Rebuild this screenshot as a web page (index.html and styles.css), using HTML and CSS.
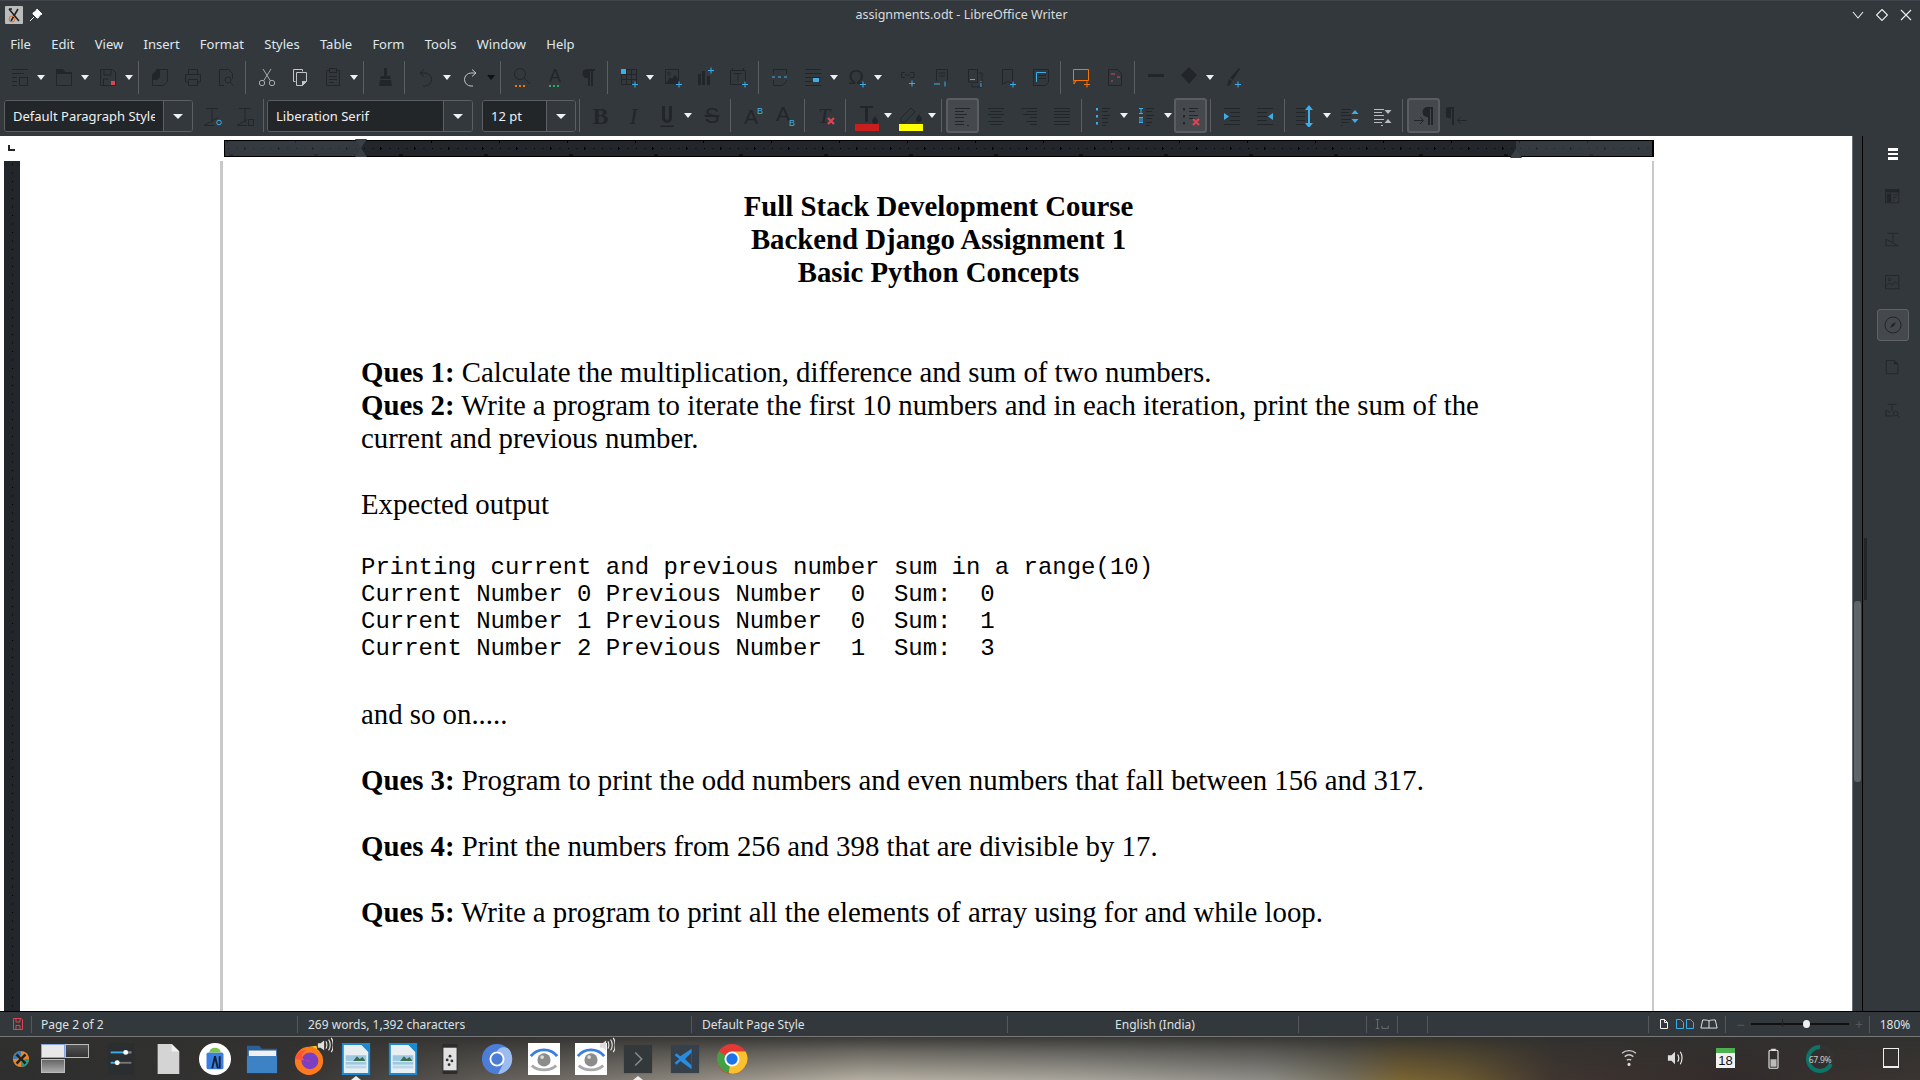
FILE: index.html
```html
<!DOCTYPE html>
<html lang="en">
<head>
<meta charset="utf-8">
<title>assignments.odt - LibreOffice Writer</title>
<link rel="stylesheet" href="styles.css">
</head>
<body>
<svg class="defs" width="0" height="0" aria-hidden="true">
<defs>
<symbol id="new" viewBox="0 0 22 22"><path d="M3 3.500h16M3 7.500h12M3 11.500h5M3 15.500h5M3 19.500h5"/><rect x="10.500" y="11.500" width="8" height="8"/></symbol>
<symbol id="open" viewBox="0 0 22 22"><path d="M3.500 3.500h6l2 3h7v13h-15z"/><path class="f" d="M3 3h7l2 3h7v2H3z"/></symbol>
<symbol id="save" viewBox="0 0 22 22"><path d="M3.500 3.500h12l3 3v13h-15zM7 4v5h7V4M6.500 19v-6h5"/><rect class="red" x="14" y="15" width="4" height="4"/></symbol>
<symbol id="tpl" viewBox="0 0 22 22"><path d="M7 3.500h11.500v12l-4 4h-11V8"/><path class="f" d="M8 3l3 0v8l-3 3H4V8z"/></symbol>
<symbol id="print" viewBox="0 0 22 22"><path d="M6.500 8V3.500h9V8M6.500 16h-3V8.500h15V16h-3M6.500 13.500h9v6h-9z"/></symbol>
<symbol id="prev" viewBox="0 0 22 22"><path d="M9 19.500H4.500v-16h9l4 4v5"/><circle cx="13" cy="14" r="3"/><path d="M15 16l3.500 3.500"/></symbol>
<symbol id="cut" viewBox="0 0 22 22"><circle cx="6" cy="17" r="2.700"/><circle cx="16" cy="17" r="2.700"/><path d="M7.500 15L15 3M14.500 15L7 3"/></symbol>
<symbol id="copy" viewBox="0 0 22 22"><path d="M6.500 15.500h-2v-12h9v2"/><path d="M7.500 6.500h10v9l-4 4h-6z"/><path class="f" d="M13 15h5l-5 5z"/></symbol>
<symbol id="paste" viewBox="0 0 22 22"><path d="M7.500 4.500h-3v15h13v-15h-3"/><rect x="7.500" y="2.500" width="7" height="4"/><path d="M7 10.500h8M7 13.500h8M7 16.500h5"/></symbol>
<symbol id="clone" viewBox="0 0 22 22"><path class="f" d="M10 2h3v8h3l1 3H6l1-3h3zM6 14h11l1 6H5z"/></symbol>
<symbol id="undo" viewBox="0 0 22 22"><path d="M9 3.500L5 7l4 3.500M5 7h5a6 6 0 0 1 0 13H8"/></symbol>
<symbol id="redo" viewBox="0 0 22 22"><path d="M13 3.500L17 7l-4 3.500M17 7h-5a6 6 0 0 0 0 13h2"/></symbol>
<symbol id="find" viewBox="0 0 22 22"><circle cx="9" cy="8" r="5.500"/><path d="M13 12l6 6"/><path class="dots-o" d="M4 20h10"/></symbol>
<symbol id="spell" viewBox="0 0 22 22"><text class="t" x="11" y="16" font-size="18">A</text><path class="dots-g" d="M5 20h2M9 20h2M13 20h2"/></symbol>
<symbol id="para" viewBox="0 0 22 22"><path class="f" d="M9 3h9v2h-2v15h-2V5h-1v15h-2v-8a4.500 4.500 0 0 1-2-9z"/></symbol>
<symbol id="table" viewBox="0 0 22 22"><rect x="3.500" y="3.500" width="15" height="15"/><path d="M3 8.500h16M3 13.500h16M8.500 3v16M13.500 3v16"/><rect class="blue" x="3" y="3" width="5" height="5"/><path class="bs" d="M14 18.500h6M17 15.500v6"/></symbol>
<symbol id="image" viewBox="0 0 22 22"><rect x="3.500" y="3.500" width="13" height="14"/><circle cx="7" cy="7.500" r="1.500"/><path class="f" d="M4 17l4-6 2 2 3-4 3 4v4z"/><path class="bs" d="M14 18.500h6M17 15.500v6"/></symbol>
<symbol id="chart" viewBox="0 0 22 22"><path class="f" d="M3 8h3v11H3zM7 5h3v14H7zM12 10h3v9h-3z"/><path class="bs" d="M13 4.500h6M16 1.500v6"/></symbol>
<symbol id="tbox" viewBox="0 0 22 22"><path d="M2.500 4.500h15v14h-15zM4.500 2v3M15.500 2v3"/><path d="M6 7.500h8M10 7.500v8"/><path class="bs" d="M14 18.500h6M17 15.500v6"/></symbol>
<symbol id="pbreak" viewBox="0 0 22 22"><path d="M4.500 8V3.500h13V8M4.500 14v5.500h9l4-4V14"/><path class="bs" d="M3 11h3M9 11h3M15 11h3"/></symbol>
<symbol id="field" viewBox="0 0 22 22"><path d="M3 3.500h16M3 7.500h16M3 11.500h16M3 15.500h16M3 19.500h16"/><rect class="blue" x="11" y="12" width="6" height="4"/></symbol>
<symbol id="omega" viewBox="0 0 22 22"><text class="t" x="10" y="18" font-size="21">Ω</text><path class="bs" d="M14 18.500h6M17 15.500v6"/></symbol>
<symbol id="link" viewBox="0 0 22 22"><path d="M7 6.500H3.500v5H7M12 6.500h4v5h-4M7 9h5"/><path class="bs" d="M11 17.500h6M14 14.500v6"/></symbol>
<symbol id="foot" viewBox="0 0 22 22"><path d="M5.500 15V3.500h11v11M8 7h6M8 10h6"/><path class="bs" d="M3 18h6M14 15.500v5"/></symbol>
<symbol id="end" viewBox="0 0 22 22"><path d="M4.500 16V3.500h9v13zM15 7h3v14H8v-3"/><path class="bs" d="M6 13.500h5M17 15v1M17 17v4"/></symbol>
<symbol id="bookmark" viewBox="0 0 22 22"><path d="M5.500 3.500h10v14l-5-2-5 3z"/><path class="bs" d="M13 18.500h6M16 15.500v6"/></symbol>
<symbol id="xref" viewBox="0 0 22 22"><path d="M3.500 3.500h15v13l-3 3h-12z"/><path class="bs" d="M6.500 16V6.500H16"/><path d="M9 9.500h7M9 12.500h7"/></symbol>
<symbol id="comment" viewBox="0 0 22 22"><path class="os" d="M2.500 3.500h15v11h-15zM3 15v3l2-3M13 18.500h6M16 15.500v6"/></symbol>
<symbol id="track" viewBox="0 0 22 22"><path d="M4.500 3.500h9l4 4v12h-13z"/><path class="rs" d="M7 8h4M13 11h3M7 15h2"/></symbol>
<symbol id="line" viewBox="0 0 22 22"><path class="f" d="M3 8h16v3H3z"/></symbol>
<symbol id="diamond" viewBox="0 0 22 22"><path class="f" d="M11 1l8 8-8 9-8-9z"/></symbol>
<symbol id="brush" viewBox="0 0 22 22"><path class="f" d="M17 2l1 1-7 11-3-2zM7 13l3 2-2 4-3 1z"/><path class="bs" d="M13 18.500h6M16 15.500v6"/></symbol>
<symbol id="tstyle" viewBox="0 0 22 22"><path d="M4 3.500h12M10 3.500v14M2 20.500l14-8"/><path d="M2 20.500h10"/><circle class="bc" cx="17" cy="17.500" r="2.300"/></symbol>
<symbol id="tupd" viewBox="0 0 22 22"><path d="M4 3.500h12M10 3.500v14M2 20.500l10-6M2 20.500h10"/><path d="M13.500 14.500h5v6h-5z"/></symbol>
<symbol id="under" viewBox="0 0 22 22"><path class="f" d="M6 1h3v12a2 2 0 0 0 4 0V1h3v12a5 5 0 0 1-10 0zM4 20.500h14v1.500H4z"/></symbol>
<symbol id="sup" viewBox="0 0 22 22"><text class="t" x="10" y="19" font-size="21">A</text><text class="tb" x="19" y="9" font-size="9">B</text></symbol>
<symbol id="sub" viewBox="0 0 22 22"><text class="t" x="9" y="16" font-size="21">A</text><text class="tb" x="18" y="21" font-size="9">B</text></symbol>
<symbol id="clear" viewBox="0 0 22 22"><text class="ti" x="9" y="18" font-size="22">T</text><path class="rb" d="M13 13l6 6M19 13l-6 6"/></symbol>
<symbol id="fcolor" viewBox="0 0 26 26"><path class="f" d="M6 1h13v2h-5v14h-3V3H6z"/><path class="f" d="M21 11c2 3 3 4 3 5a3 3 0 0 1-6 0c0-1 1-2 3-5z"/><rect class="redbar" x="1" y="19" width="24" height="7"/></symbol>
<symbol id="hcolor" viewBox="0 0 26 26"><path d="M3 13L13 3l4 4L7 17H3z"/><path class="f" d="M21 9c2 3 3 4 3 5a3 3 0 0 1-6 0c0-1 1-2 3-5z"/><rect class="yelbar" x="1" y="19" width="24" height="7"/></symbol>
<symbol id="al" viewBox="0 0 22 22"><path d="M3 3.500h15M3 6.500h9M3 9.500h12M3 12.500h9M3 16.500h9M3 19.500h9M15 20.500h2"/></symbol>
<symbol id="ac" viewBox="0 0 22 22"><path d="M3 3.500h16M5 6.500h12M3 9.500h16M6 12.500h10M3 16.500h16M5 19.500h12"/></symbol>
<symbol id="ar" viewBox="0 0 22 22"><path d="M3 3.500h16M9 6.500h10M5 9.500h14M12 12.500h7M8 16.500h11M12 19.500h7"/></symbol>
<symbol id="aj" viewBox="0 0 22 22"><path d="M3 3.500h16M3 6.500h16M3 9.500h16M3 12.500h16M3 16.500h16M3 19.500h16"/></symbol>
<symbol id="bull" viewBox="0 0 22 22"><path class="bw" d="M5 3v2.500M5 10v2.500M5 17v2.500"/><path d="M10 3.500h8M10 6.500h6M10 10.500h8M10 13.500h6M10 17.500h6M10 20.500h4"/></symbol>
<symbol id="num" viewBox="0 0 22 22"><path class="bs" d="M3 3.500h4M5 3.500v5M3 8.500h4M3 12.500h4M4 12.500v5M6 12.500v5M3 17.500h4"/><path d="M10 3.500h8M10 6.500h6M10 10.500h8M10 13.500h6M10 17.500h6M10 20.500h4"/></symbol>
<symbol id="outl" viewBox="0 0 22 22"><path class="dw" d="M4 3v2.500M4 10v2.500M4 17v2.500"/><path d="M9 3.500h9M9 6.500h6M9 10.500h9M9 13.500h6"/><path class="rb" d="M13 14l6 6M19 14l-6 6"/></symbol>
<symbol id="ind" viewBox="0 0 22 22"><path d="M3 3.500h16M9 7.500h10M9 11.500h10M9 15.500h10M3 19.500h16"/><path class="blue" d="M3 8l5 3.500L3 15z"/></symbol>
<symbol id="dedt" viewBox="0 0 22 22"><path d="M3 3.500h16M3 7.500h10M3 11.500h10M3 15.500h10M3 19.500h16"/><path class="blue" d="M19 8l-5 3.500 5 3.500z"/></symbol>
<symbol id="lspace" viewBox="0 0 22 22"><path d="M1 3.500h9M1 7.500h9M1 11.500h9M1 15.500h9M1 19.500h9"/><path class="bw" d="M14 3v17"/><path class="blue" d="M14 0l4 5h-8zM14 23l4-5h-8z"/></symbol>
<symbol id="pinc" viewBox="0 0 22 22"><path d="M2 4.500h10M2 7.500h8M2 10.500h10M2 14.500h10M2 17.500h8M2 20.500h2"/><path class="blue" d="M16 5l3.500 4h-7zM16 18l3.500-4h-7z"/></symbol>
<symbol id="pdec" viewBox="0 0 22 22"><path class="lg" d="M2 4.500h10M2 7.500h8M2 10.500h10M2 14.500h10M2 17.500h8M9 20.500h2"/><path class="gf" d="M16 9l3.500-4h-7zM16 14l3.500 4h-7z"/></symbol>
<symbol id="ltr" viewBox="0 0 22 22"><path class="f" d="M14 2h6v18h-2V4h-1v16h-2v-8a5 5 0 0 1-1-10z"/><path d="M1 15.500h9M7 12l3.500 3.500L7 19"/></symbol>
<symbol id="rtl" viewBox="0 0 22 22"><path class="f" d="M2 2h6v18H6V4H5v9a5 5 0 0 1-3-11z"/><path d="M21 15.500h-9M15 12l-3.500 3.500L15 19"/></symbol>
<symbol id="sb1" viewBox="0 0 18 18"><rect x=".5" y=".5" width="15" height="15"/><path class="f" d="M1 1h15v3H1zM2 5h5v10H2z"/><path d="M9 6.500h5M9 9.500h4M9 12.500h2"/></symbol>
<symbol id="sb2" viewBox="0 0 18 18"><path d="M3 1.500h12M9 1.500v10M1 15.500h14L1 8z"/></symbol>
<symbol id="sb3" viewBox="0 0 18 18"><rect x=".5" y=".5" width="15" height="15"/><circle cx="5" cy="5" r="1.500"/><path d="M1 12l4-3 3 2 4-3 3 3"/></symbol>
<symbol id="sb4" viewBox="0 0 18 18"><circle cx="9" cy="9" r="8"/><path class="f" d="M12 6l-2 4-4 2 2-4z"/></symbol>
<symbol id="sb5" viewBox="0 0 18 18"><path d="M1.500 .5h9l4 4v11h-13z"/><path class="f" d="M10 1l5 4h-5z"/></symbol>
<symbol id="sb6" viewBox="0 0 18 18"><path d="M3 1.500h10M8 1.500v8M1 14.500h8M1 14.500V8l5 3"/><circle cx="12" cy="12" r="2.500"/><path d="M14 14l2.500 2.500"/></symbol>
<symbol id="stsave" viewBox="0 0 12 14"><path d="M1.500 1.500h8l1 1v10h-9zM4 2v3h4V2M4 12.500V8.500h4v4"/></symbol>
<symbol id="v1" viewBox="0 0 12 12"><path d="M2.500 1.500h4l3 3v6h-7zM6.500 1.500v3h3"/></symbol>
<symbol id="v2" viewBox="0 0 20 12"><path d="M1.500 1.500h4l3 3v6h-7zM11.500 1.500h4l3 3v6h-7z"/></symbol>
<symbol id="v3" viewBox="0 0 20 12"><path d="M10 2.500c-2-1-4-1-7 -1l-2 9h18l-2-9c-3 0-5 0-7 1zM10 2.500v8"/></symbol>
</defs>
</svg>

<div class="app">
  <header class="titlebar">
    <div class="tb-left">
      <svg class="appicon" viewBox="0 0 18 18"><rect width="18" height="18" rx="1" fill="#bcbcbc"/><path d="M4 3l10 12M13 3L6 15M4 3h3" stroke="#222" stroke-width="1.600" fill="none"/><circle cx="7" cy="13" r="3" fill="none" stroke="#d2703a"/></svg>
      <svg class="pin" viewBox="0 0 14 14"><path d="M8 1l5 5-2 1-2 3-1 0-4-4 0-1 3-2zM5 9l-4 4" fill="#fff" stroke="#fff"/></svg>
    </div>
    <div class="title">assignments.odt - LibreOffice Writer</div>
    <div class="winbtns">
      <svg viewBox="0 0 12 12"><path d="M1 3l5 6 5-6"/></svg>
      <svg viewBox="0 0 12 12"><path d="M6 .5L11.500 6 6 11.500.5 6z"/></svg>
      <svg viewBox="0 0 12 12"><path d="M1 1l10 10M11 1L1 11"/></svg>
    </div>
  </header>

  <nav class="menubar">
    <span>File</span><span>Edit</span><span>View</span><span>Insert</span><span>Format</span><span>Styles</span><span>Table</span><span>Form</span><span>Tools</span><span>Window</span><span>Help</span>
  </nav>

  <div class="toolbar t1">
    <i class="b"><svg><use href="#new"/></svg></i><i class="a"></i>
    <i class="b"><svg><use href="#open"/></svg></i><i class="a"></i>
    <i class="b"><svg><use href="#save"/></svg></i><i class="a"></i><i class="s"></i>
    <i class="b"><svg><use href="#tpl"/></svg></i>
    <i class="b"><svg><use href="#print"/></svg></i>
    <i class="b"><svg><use href="#prev"/></svg></i><i class="s"></i>
    <i class="b lit"><svg><use href="#cut"/></svg></i>
    <i class="b lit2"><svg><use href="#copy"/></svg></i>
    <i class="b"><svg><use href="#paste"/></svg></i><i class="a"></i><i class="s"></i>
    <i class="b"><svg><use href="#clone"/></svg></i><i class="s"></i>
    <i class="b"><svg><use href="#undo"/></svg></i><i class="a"></i>
    <i class="b lit2"><svg><use href="#redo"/></svg></i><i class="a dark"></i><i class="s"></i>
    <i class="b"><svg><use href="#find"/></svg></i>
    <i class="b"><svg><use href="#spell"/></svg></i>
    <i class="b"><svg><use href="#para"/></svg></i><i class="s"></i>
    <i class="b"><svg><use href="#table"/></svg></i><i class="a"></i>
    <i class="b"><svg><use href="#image"/></svg></i>
    <i class="b"><svg><use href="#chart"/></svg></i>
    <i class="b"><svg><use href="#tbox"/></svg></i><i class="s"></i>
    <i class="b"><svg><use href="#pbreak"/></svg></i>
    <i class="b"><svg><use href="#field"/></svg></i><i class="a"></i>
    <i class="b"><svg><use href="#omega"/></svg></i><i class="a"></i><i class="sp"></i>
    <i class="b"><svg><use href="#link"/></svg></i>
    <i class="b"><svg><use href="#foot"/></svg></i>
    <i class="b"><svg><use href="#end"/></svg></i>
    <i class="b"><svg><use href="#bookmark"/></svg></i>
    <i class="b"><svg><use href="#xref"/></svg></i><i class="s"></i>
    <i class="b"><svg><use href="#comment"/></svg></i>
    <i class="b"><svg><use href="#track"/></svg></i><i class="s"></i>
    <i class="b"><svg><use href="#line"/></svg></i>
    <i class="b"><svg><use href="#diamond"/></svg></i><i class="a"></i>
    <i class="b"><svg><use href="#brush"/></svg></i>
  </div>

  <div class="toolbar t2">
    <div class="combo c-style"><span class="ctext"><span class="clip">Default Paragraph Style</span></span><span class="carrow"></span></div>
    <i class="b"><svg><use href="#tstyle"/></svg></i>
    <i class="b"><svg><use href="#tupd"/></svg></i><i class="s tight"></i>
    <div class="combo c-font"><span class="ctext">Liberation Serif</span><span class="carrow"></span></div>
    <div class="combo c-size"><span class="ctext">12 pt</span><span class="carrow"></span></div><i class="s"></i>
    <i class="b glyph bold">B</i>
    <i class="b glyph ital">I</i>
    <i class="b"><svg><use href="#under"/></svg></i><i class="a"></i>
    <i class="b glyph strike">S</i><i class="s"></i>
    <i class="b"><svg><use href="#sup"/></svg></i>
    <i class="b"><svg><use href="#sub"/></svg></i><i class="s"></i>
    <i class="b"><svg><use href="#clear"/></svg></i><i class="s"></i>
    <i class="b"><svg class="big"><use href="#fcolor"/></svg></i><i class="a"></i>
    <i class="b"><svg class="big"><use href="#hcolor"/></svg></i><i class="a"></i><i class="s"></i>
    <i class="b on"><svg><use href="#al"/></svg></i>
    <i class="b"><svg><use href="#ac"/></svg></i>
    <i class="b"><svg><use href="#ar"/></svg></i>
    <i class="b"><svg><use href="#aj"/></svg></i><i class="s"></i>
    <i class="b"><svg><use href="#bull"/></svg></i><i class="a"></i>
    <i class="b"><svg><use href="#num"/></svg></i><i class="a"></i>
    <i class="b on"><svg><use href="#outl"/></svg></i><i class="s"></i>
    <i class="b"><svg><use href="#ind"/></svg></i>
    <i class="b"><svg><use href="#dedt"/></svg></i><i class="s"></i>
    <i class="b"><svg><use href="#lspace"/></svg></i><i class="a"></i>
    <i class="b"><svg><use href="#pinc"/></svg></i>
    <i class="b"><svg><use href="#pdec"/></svg></i><i class="s"></i>
    <i class="b on"><svg><use href="#ltr"/></svg></i>
    <i class="b"><svg><use href="#rtl"/></svg></i>
  </div>

  <main class="workspace">
    <section class="docview">
      <div class="ruler-row">
        <div class="corner"><span class="tabmark"></span></div>
        <div class="hruler"><div class="hr-m"></div><div class="hr-body"><i class="lh"></i><i class="rh"></i></div><div class="hr-m r"></div></div>
      </div>
      <div class="page-row">
        <div class="vruler"></div>
        <article class="page">
          <h1>Full Stack Development Course<br>Backend Django Assignment 1<br>Basic Python Concepts</h1>
          <p class="gap2"><b>Ques 1:</b> Calculate the multiplication, difference and sum of two numbers.</p>
          <p><b>Ques 2:</b> Write a program to iterate the first 10 numbers and in each iteration, print the sum of the current and previous number.</p>
          <p class="gap">Expected output</p>
          <pre class="gap-m">Printing current and previous number sum in a range(10)
Current Number 0 Previous Number  0  Sum:  0
Current Number 1 Previous Number  0  Sum:  1
Current Number 2 Previous Number  1  Sum:  3</pre>
          <p class="gap-a">and so on.....</p>
          <p class="gap"><b>Ques 3:</b> Program to print the odd numbers and even numbers that fall between 156 and 317.</p>
          <p class="gap"><b>Ques 4:</b> Print the numbers from 256 and 398 that are divisible by 17.</p>
          <p class="gap"><b>Ques 5:</b> Write a program to print all the elements of array using for and while loop.</p>
        </article>
      </div>
    </section>
    <div class="vscroll"><span class="thumb"></span></div>
    <aside class="sidebar">
      <span class="grip"></span>
      <div class="burger"><i></i><i></i><i></i></div>
      <svg class="sb"><use href="#sb1"/></svg>
      <svg class="sb"><use href="#sb2"/></svg>
      <svg class="sb"><use href="#sb3"/></svg>
      <div class="sbon"><svg class="sb"><use href="#sb4"/></svg></div>
      <svg class="sb"><use href="#sb5"/></svg>
      <svg class="sb"><use href="#sb6"/></svg>
    </aside>
  </main>

  <footer class="status">
    <div class="cell w-save"><svg class="stsave"><use href="#stsave"/></svg></div>
    <div class="cell w-page">Page 2 of 2</div>
    <div class="cell w-words">269 words, 1,392 characters</div>
    <div class="cell w-style">Default Page Style</div>
    <div class="cell w-lang">English (India)</div>
    <div class="cell w-ins"></div>
    <div class="cell w-sel"><svg class="cursor" viewBox="0 0 18 12"><path d="M2 1h4M4 1v10M2 11h4M9 8v3h7V8"/></svg></div>
    <div class="cell w-c1"></div>
    <div class="cell w-c2"></div>
    <div class="cell w-view"><svg class="v1"><use href="#v1"/></svg><svg class="v2"><use href="#v2"/></svg><svg class="v3"><use href="#v3"/></svg></div>
    <div class="cell w-zoom"><span class="zm">−</span><span class="slider"><i class="notch"></i><i class="knob"></i></span><span class="zm">+</span></div>
    <div class="cell w-pct">180%</div>
  </footer>

  <div class="taskbar">
    <svg class="start" viewBox="0 0 20 20"><circle cx="10" cy="10" r="9" fill="#e8862c"/><path d="M10 19a9 9 0 0 0 9-9h-5a4 4 0 0 1-4 4z" fill="#1f9c8c"/><path d="M1 10a9 9 0 0 1 9-9v5a4 4 0 0 0-4 4z" fill="#3a7cb8"/><path d="M6 4l4 4 4-4 2 2-4 4 4 4-2 2-4-4-4 4-2-2 4-4-4-4z" fill="#222"/></svg>
    <div class="pager"><i class="on"></i><i class="d"></i><i class="g"></i></div>

    <svg class="ti" viewBox="0 0 34 34"><rect x="3" width="28" height="34" fill="#2b2e31"/><path d="M6 10h22" stroke="#3daee9" stroke-width="2"/><path d="M20 10h8" stroke="#777" stroke-width="2"/><circle cx="22" cy="10" r="2.600" fill="#fff"/><path d="M6 21h8" stroke="#3daee9" stroke-width="2"/><path d="M14 21h14" stroke="#777" stroke-width="2"/><circle cx="13" cy="21" r="2.600" fill="#fff"/></svg>
    <svg class="ti" viewBox="0 0 28 34"><path d="M3 1h15l8 8v24H3z" fill="#d4d4d4"/><path d="M18 1l8 8h-8z" fill="#f2f2f2"/></svg>
    <svg class="ti" viewBox="0 0 34 34"><circle cx="17" cy="17" r="17" fill="#fff"/><rect x="8" y="10" width="18" height="18" rx="2" fill="#3b7de0"/><path d="M11 10a6 5 0 0 1 12 0z" fill="#7cc44a"/><path d="M14 27l3-13 3 13M22 14v13" stroke="#123" stroke-width="2" fill="none"/></svg>
    <svg class="ti" viewBox="0 0 34 34"><path d="M1 3h13l3 3h16v26H1z" fill="#2a6099"/><rect x="3" y="8" width="29" height="6" fill="#f0f0f0"/><path d="M1 14h32v18H1z" fill="#3c82c4"/></svg>
    <div class="ti-wrap">
      <svg class="ti" viewBox="0 0 34 34"><circle cx="17" cy="19" r="15" fill="#ff7a1a"/><path d="M17 4c8 0 15 7 15 15 0-5-2-9-6-11l-1-5z" fill="#ffc51a"/><circle cx="18" cy="19" r="9" fill="#7b3fc4"/><path d="M2 17c3-8 8-10 12-9-3 1-5 4-4 7 1 4 5 5 9 4" fill="#ff4f3f"/></svg>
      <svg class="snd" viewBox="0 0 18 18"><path d="M1 7h3l4-3v11l-4-3H1z" fill="#ddd"/><path d="M10 5c1.500 2 1.500 6 0 8M13 3c2.500 3 2.500 9 0 12M16 1c3 4 3 12 0 16" stroke="#eee" fill="none" stroke-width="1.200"/></svg>
    </div>
    <div class="ti-wrap cur">
      <svg class="ti" viewBox="0 0 30 34"><path d="M1 1h20l8 8v24H1z" fill="#e8eef2" stroke="#1b8ad0" stroke-width="2"/><path d="M20 0l10 10V0z" fill="#1b8ad0"/><path d="M4 13h22v6H4z" fill="#9cc8e0"/><rect x="4" y="20" width="22" height="3" fill="#9cc8e0"/><rect x="4" y="24" width="22" height="3" fill="#bcd8e8"/><path d="M12 19l4-5 3 3 3-2 3 4z" fill="#3c6e50"/></svg>
    </div>
    <div class="ti-wrap">
      <svg class="ti" viewBox="0 0 30 34"><path d="M1 1h20l8 8v24H1z" fill="#e8eef2" stroke="#1b8ad0" stroke-width="2"/><path d="M20 0l10 10V0z" fill="#1b8ad0"/><path d="M4 13h22v6H4z" fill="#9cc8e0"/><rect x="4" y="20" width="22" height="3" fill="#9cc8e0"/><rect x="4" y="24" width="22" height="3" fill="#bcd8e8"/><path d="M12 19l4-5 3 3 3-2 3 4z" fill="#3c6e50"/></svg>
    </div>
    <svg class="ti" viewBox="0 0 34 34"><rect x="9" y="1" width="16" height="32" rx="1" fill="#2c2c2c"/><rect x="10" y="5" width="14" height="24" fill="#e2e2e2"/><circle cx="17" cy="14" r="1.500" fill="#333"/><circle cx="14" cy="18" r="1.500" fill="#333"/><circle cx="19" cy="19" r="1.500" fill="#333"/><circle cx="16" cy="23" r="1.500" fill="#333"/></svg>
    <svg class="ti" viewBox="0 0 34 34"><circle cx="17" cy="17" r="16" fill="#4c7ed8"/><path d="M17 9a8 8 0 0 1 15 2 16 16 0 0 1-14 22l5-10z" fill="#9cbcf0"/><circle cx="17" cy="17" r="8" fill="#fff"/><circle cx="17" cy="17" r="6" fill="#4c7ed8"/></svg>
    <svg class="ti" viewBox="0 0 34 34"><rect width="34" height="34" fill="#fff"/><path d="M3 14c7-9 21-9 28 0" stroke="#3b7de0" stroke-width="3" fill="none"/><path d="M4 24c7 6 19 6 26 0" stroke="#aaa" stroke-width="3" fill="none"/><circle cx="17" cy="18" r="7" fill="#8c8c8c"/><circle cx="15" cy="15" r="2" fill="#ddd"/></svg>
    <div class="ti-wrap">
      <svg class="ti" viewBox="0 0 34 34"><rect width="34" height="34" fill="#fff"/><path d="M3 14c7-9 21-9 28 0" stroke="#3b7de0" stroke-width="3" fill="none"/><path d="M4 24c7 6 19 6 26 0" stroke="#aaa" stroke-width="3" fill="none"/><circle cx="17" cy="18" r="7" fill="#8c8c8c"/><circle cx="15" cy="15" r="2" fill="#ddd"/></svg>
      <svg class="snd" viewBox="0 0 18 18"><path d="M1 7h3l4-3v11l-4-3H1z" fill="#ddd"/><path d="M10 5c1.500 2 1.500 6 0 8M13 3c2.500 3 2.500 9 0 12M16 1c3 4 3 12 0 16" stroke="#eee" fill="none" stroke-width="1.200"/></svg>
    </div>
    <div class="ti-wrap cur">
      <svg class="ti" viewBox="0 0 34 34"><rect x="2" y="2" width="30" height="30" fill="#33393b"/><path d="M14 10l7 7-7 7" stroke="#8a8f90" stroke-width="1.500" fill="none"/></svg>
    </div>
    <svg class="ti" viewBox="0 0 34 34"><rect x="2" y="2" width="30" height="30" fill="#36404a"/><path d="M24 6v22l-12-9-4 4-2-2 5-4-5-4 2-2 4 3z" fill="#2a8ce0"/><path d="M24 10v14l-7-7z" fill="#36404a"/></svg>
    <svg class="ti" viewBox="0 0 34 34"><circle cx="17" cy="17" r="16" fill="#e53935"/><path d="M17 17L3 9a16 16 0 0 0 10 23z" fill="#43a047"/><path d="M17 9h14.500a16 16 0 0 1-18 23z" fill="#fbc02d"/><circle cx="17" cy="17" r="8" fill="#fff"/><circle cx="17" cy="17" r="6" fill="#1a73e8"/></svg>

    <div class="tray">
      <svg class="wifi" viewBox="0 0 18 22"><path d="M1 6c4-4 12-4 16 0M4 10c3-2.500 7-2.500 10 0M6.500 14c1.500-1 3.500-1 5 0" stroke="#ccc" stroke-width="1.600" fill="none"/><circle cx="9" cy="19" r="1.800" fill="#ddd"/></svg>
      <svg class="spk" viewBox="0 0 18 20"><path d="M1 7h4l4-4v14l-4-4H1z" fill="#ddd"/><path d="M12 6c1.500 2.500 1.500 6 0 8M15 3c2.500 4 2.500 10 0 14" stroke="#eee" fill="none" stroke-width="1.300"/></svg>
      <div class="cal"><span class="cal-top"></span><span class="cal-num">18</span></div>
      <svg class="batt" viewBox="0 0 14 28"><rect x="4" y="1" width="6" height="3" fill="#ddd"/><rect x="1" y="3" width="12" height="24" rx="1.500" fill="none" stroke="#e8e8e8" stroke-width="1.500"/><rect x="3" y="15" width="8" height="10" fill="#bbb"/></svg>
      <div class="gauge"><span>67.9%</span></div>
      <span class="showdesk"></span>
    </div>
  </div>
</div>
</body>
</html>
```
FILE: styles.css
```css
* { box-sizing: border-box; }
html, body { margin: 0; height: 100%; }
body { overflow: hidden; background: #31363b; font-family: "Noto Sans", "Open Sans", sans-serif; color: #eff0f1; font-size: 13px; }
.defs { position: absolute; }
.app { display: flex; flex-direction: column; width: 1920px; height: 1080px; }

.titlebar { height: 29px; flex: none; display: flex; align-items: center; background: #33383c; border-top: 1px solid #41464c; position: relative; }
.tb-left { display: flex; align-items: center; gap: 6px; padding-left: 5px; width: 600px; }
.appicon { width: 18px; height: 18px; }
.pin { width: 14px; height: 14px; }
.title { flex: 1; text-align: center; font-size: 12.500px; color: #d9dbdc; margin-top: -1px; padding-left: 3px; }
.winbtns { width: 600px; display: flex; justify-content: flex-end; gap: 12px; padding-right: 8px; }
.winbtns svg { width: 12px; height: 12px; fill: none; stroke: #eff0f1; stroke-width: 1.100; }

.menubar { height: 30px; flex: none; display: flex; align-items: center; background: #33383c; color: #dfe8ee; }
.menubar span { padding: 0 10.150px; }

.toolbar { flex: none; display: flex; align-items: center; background: #33383c; color: #232629; }
.t1 { height: 38px; padding-left: 3px; padding-bottom: 2px; }
.t2 { height: 39px; padding-left: 4px; padding-bottom: 2px; }
.b { flex: none; width: 33px; height: 33px; display: flex; align-items: center; justify-content: center; font-style: normal; color: #232629; }
.b svg { width: 22px; height: 22px; fill: none; stroke: currentColor; stroke-width: 1; overflow: visible; }
.b svg.big { width: 26px; height: 26px; margin-top: 4px; }
.b.lit { color: #a9abad; }
.b.lit2 { color: #c2c4c5; }
.b.on { background: #45494e; border: 2px solid #5a5e62; border-radius: 3px; height: 35px; }
.a { flex: none; width: 11px; height: 33px; position: relative; }
.a::after { content: ""; position: absolute; left: 1px; top: 14px; border-left: 4.500px solid transparent; border-right: 4.500px solid transparent; border-top: 5px solid #eff0f1; }
.a.dark::after { border-top-color: #111; }
.s { flex: none; width: 8px; height: 33px; position: relative; }
.s::after { content: ""; position: absolute; left: 3px; top: 0; width: 1px; height: 33px; background: #5b5f63; }
.s.tight { width: 5px; }
.s.tight::after { left: 1px; }
.sp { flex: none; width: 8px; }

.glyph { font-family: "Liberation Serif", serif; font-size: 24px; line-height: 1; }
.bold { font-weight: 700; color: #232629; }
.ital { font-style: italic; }
.strike { font-family: "Liberation Sans", sans-serif; text-decoration: line-through; font-size: 22px; padding-left: 3px; }

.combo { flex: none; height: 32px; display: flex; border: 1px solid #5b5f63; border-radius: 3px; color: #eff0f1; overflow: hidden; }
.ctext { flex: 1; min-width: 0; background: #232629; padding: 0 0 0 8px; line-height: 30px; white-space: nowrap; overflow: hidden; }
.clip { display: block; overflow: hidden; width: 142px; }
.carrow { flex: none; width: 29px; border-left: 1px solid #5b5f63; position: relative; background: #33383c; }
.carrow::after { content: ""; position: absolute; left: 9px; top: 13px; border-left: 5px solid transparent; border-right: 5px solid transparent; border-top: 5.500px solid #eff0f1; }
.c-style { width: 189px; margin-right: 3px; }
.c-font { width: 206px; margin-right: 9px; }
.c-size { width: 94px; }

.t { fill: currentColor; stroke: none; text-anchor: middle; font-family: "Liberation Sans", sans-serif; }
.tb { fill: #3daee9; stroke: none; text-anchor: middle; font-family: "Liberation Sans", sans-serif; }
text.ti { fill: currentColor; stroke: none; text-anchor: middle; font-family: "Liberation Serif", serif; font-style: italic; }
.f { fill: currentColor; stroke: none; }
.red { fill: #da4453; stroke: none; }
.blue { fill: #3daee9; stroke: none; }
.bs { stroke: #3daee9; fill: none; }
.bw { stroke: #3daee9; stroke-width: 2; }
.bc { stroke: #3daee9; }
.dw { stroke-width: 2; }
.rb { stroke: #da4453; stroke-width: 2.200; }
.rs { stroke: #da4453; }
.os { stroke: #f67400; }
.dots-o { stroke: #f67400; stroke-width: 2; stroke-dasharray: 2 2; }
.dots-g { stroke: #27ae60; stroke-width: 2; }
.redbar { fill: #c81e1e; stroke: none; }
.yelbar { fill: #ffff00; stroke: none; }
.lg { stroke: #b9bbbd; }
.gf { fill: #b9bbbd; stroke: none; }

.workspace { flex: none; height: 875px; display: flex; }
.docview { flex: 1; min-width: 0; background: #fff; overflow: hidden; padding-top: 4px; }
.ruler-row { display: flex; height: 17px; }
.corner { width: 224px; flex: none; position: relative; }
.tabmark { position: absolute; left: 8px; top: 5px; width: 7px; height: 6px; border-left: 2px solid #232629; border-bottom: 2px solid #232629; }
.hruler { width: 1430px; flex: none; display: flex; border: 1px solid #000; border-width: 1px 2px 1px 1px; background-color: #22262a;
  background-image: linear-gradient(90deg, #000 1px, transparent 1px), linear-gradient(90deg, #000 1px, transparent 1px), linear-gradient(90deg, #000 1px, transparent 1px), linear-gradient(90deg, #111 4px, transparent 4px);
  background-size: 8.500px 1px, 68px 2px, 34px 3px, 85px 2px;
  background-position: 3px 7px, 2px 0, 19px 6px, 4px 13px;
  background-repeat: repeat-x; }
.hr-m { width: 136px; flex: none; background: rgba(76,84,92,.45); }
.hr-body { flex: 1; position: relative; }
.lh, .rh { position: absolute; background: #3a3f44; }
.lh { left: -6px; top: -2px; width: 12px; height: 18px; clip-path: polygon(0 0, 100% 0, 50% 50%, 100% 100%, 0 100%, 50% 50%); }
.rh { right: -6px; top: 8px; height: 9px; width: 12px; clip-path: polygon(50% 0, 100% 100%, 0 100%); }

.page-row { display: flex; margin-top: 4px; height: 850px; padding-left: 4px; }
.vruler { width: 16px; flex: none; background-color: #22262a;
  background-image: linear-gradient(#000 1px, transparent 1px);
  background-size: 1px 8.500px; background-position: 8px 3px; background-repeat: repeat-y; }
.page { width: 1434px; margin-left: 200px; flex: none; border-left: 3px solid #c9c9c9; border-right: 2px solid #c9c9c9; padding: 29px 136px 0 138px; background: #fff; color: #000; font-family: "Liberation Serif", serif; font-size: 28.800px; line-height: 33.100px; }
.page h1 { margin: 0; font-size: inherit; font-weight: 700; text-align: center; line-height: 33.100px; }
.page p { margin: 0; }
.page pre { margin: 0; font-family: "Liberation Mono", monospace; font-size: 24px; line-height: 27px; }
.gap2 { margin-top: 66.500px !important; }
.gap { margin-top: 33.100px !important; }
.gap-m { margin-top: 33px !important; }
.gap-a { margin-top: 35.400px !important; }

.vscroll { width: 11px; flex: none; background: #33383c; border-left: 1px solid #6a6e72; border-right: 1px solid #000; position: relative; }
.thumb { position: absolute; left: 1px; top: 465px; width: 7px; height: 181px; background: #5f6468; border-radius: 3px; }
.sidebar { width: 57px; flex: none; background: #33383c; display: flex; flex-direction: column; align-items: center; padding: 12px 0 0 2px; color: #232629; position: relative; }
.grip { position: absolute; left: 1px; top: 402px; width: 3px; height: 62px; background: #232629; }
.burger { display: flex; flex-direction: column; gap: 2px; height: 10px; margin-bottom: 17px; width: 10px; }
.burger i { height: 2.500px; background: #fff; display: block; flex: none; }
.sb { width: 16px; height: 16px; fill: none; stroke: currentColor; stroke-width: 1; overflow: visible; margin: 13.500px 0; flex: none; }
.sbon { flex: none; width: 32px; height: 32px; margin: 5px 0; background: #45494e; border: 1px solid #5f6468; border-radius: 3px; display: flex; align-items: center; justify-content: center; }
.sbon .sb { margin: 0; width: 18px; height: 18px; }

.status { flex: none; height: 26px; display: flex; align-items: center; background: #33383c; border-top: 1px solid #000; border-bottom: 1px solid #777; font-size: 12px; color: #dfe1e2; }
.cell { height: 17px; display: flex; align-items: center; border-right: 1px solid #54585c; flex: none; white-space: nowrap; }
.w-save { width: 32px; justify-content: center; padding-left: 4px; }
.stsave { width: 12px; height: 14px; stroke: #da4453; fill: none; }
.w-page { width: 266px; padding-left: 9px; }
.w-words { width: 394px; padding-left: 10px; }
.w-style { width: 316px; padding-left: 10px; }
.w-lang { width: 291px; justify-content: center; padding-left: 4px; }
.w-ins { width: 68px; }
.w-sel { width: 31px; justify-content: center; }
.cursor { width: 16px; height: 12px; fill: none; stroke: #6d7175; }
.w-c1 { width: 30px; }
.w-c2 { width: 221px; }
.w-view { width: 77px; justify-content: center; gap: 5px; padding-left: 2px; }
.v1 { width: 12px; height: 12px; fill: none; stroke: #eff0f1; }
.v2 { width: 20px; height: 12px; fill: none; stroke: #3daee9; }
.v3 { width: 18px; height: 12px; fill: none; stroke: #eff0f1; }
.w-zoom { width: 144px; padding-left: 11px; gap: 6px; }
.zm { color: #54585c; font-size: 14px; }
.slider { width: 98px; height: 2px; background: #111; position: relative; display: block; }
.notch { position: absolute; left: 31px; top: -4px; width: 1px; height: 8px; background: #222; }
.knob { position: absolute; left: 52px; top: -3px; width: 7px; height: 8px; background: #eff0f1; border-radius: 50%; }
.w-pct { flex: 1; justify-content: center; border: 0; }

.taskbar { flex: 1; min-height: 0; display: flex; align-items: center; position: relative; background:
  linear-gradient(180deg, rgba(48,48,46,.92) 0, rgba(48,48,46,.55) 35%, rgba(48,48,46,0) 100%),
  linear-gradient(90deg, #2e2e2e 0, #343332 15%, #6b6660 28%, #b5afa2 45%, #a7a49b 56%, #8c8b85 66%, #75705f 70%, #7a6433 73%, #6d5a30 76%, #3f3530 81%, #332b2b 90%, #3a3432 100%); }
.start { width: 18px; height: 18px; margin-left: 12px; flex: none; }
.pager { display: grid; grid-template-columns: 24px 24px; grid-template-rows: 14px 14px; gap: 1px 0; margin-left: 11px; margin-right: 8.500px; flex: none; }
.pager i { display: block; border: 1px solid #bbb; background: linear-gradient(#666, #aaa); }
.pager .on { background: #e8e8e8; border-color: #8aa4e8; }
.pager .d { background: linear-gradient(#555, #333); }
.taskbar .ti { width: 32px; height: 32px; flex: none; margin: 0 7.500px; display: block; }
.ti-wrap { position: relative; flex: none; height: 43px; display: flex; align-items: center; }
.snd { position: absolute; right: 0; top: 0; width: 16px; height: 16px; }
.cur::after { content: ""; position: absolute; left: 50%; margin-left: -5px; bottom: 0; border-left: 5px solid transparent; border-right: 5px solid transparent; border-bottom: 4px solid #eee; }
.tray { position: absolute; left: 0; top: 0; bottom: 0; right: 0; pointer-events: none; }
.wifi, .spk, .cal, .batt, .gauge, .showdesk { position: absolute; }
.wifi { left: 1621px; top: 11px; width: 16px; height: 19px; }
.spk { left: 1667px; top: 12px; width: 16px; height: 18px; }
.cal { left: 1716px; top: 11px; width: 19px; height: 20px; background: #f2f2f2; display: flex; flex-direction: column; align-items: center; color: #111; }
.cal-top { height: 5px; width: 100%; background: #4caf50; flex: none; }
.cal-num { font-size: 13px; line-height: 15px; font-family: "Liberation Sans", sans-serif; }
.batt { left: 1767px; top: 11px; width: 13px; height: 21px; }
.gauge { left: 1806px; top: 8px; width: 28px; height: 28px; border-radius: 50%; background: conic-gradient(#333 0 32%, #0d7468 32% 100%); display: flex; align-items: center; justify-content: center; }
.gauge::before { content: ""; position: absolute; inset: 4px; border-radius: 50%; background: #352e2e; }
.gauge span { position: relative; font-size: 8.500px; color: #ccc; letter-spacing: -.3px; }
.showdesk { left: 1883px; top: 11px; width: 16px; height: 20px; border: 1px solid #eee; border-bottom-width: 2px; }
```
